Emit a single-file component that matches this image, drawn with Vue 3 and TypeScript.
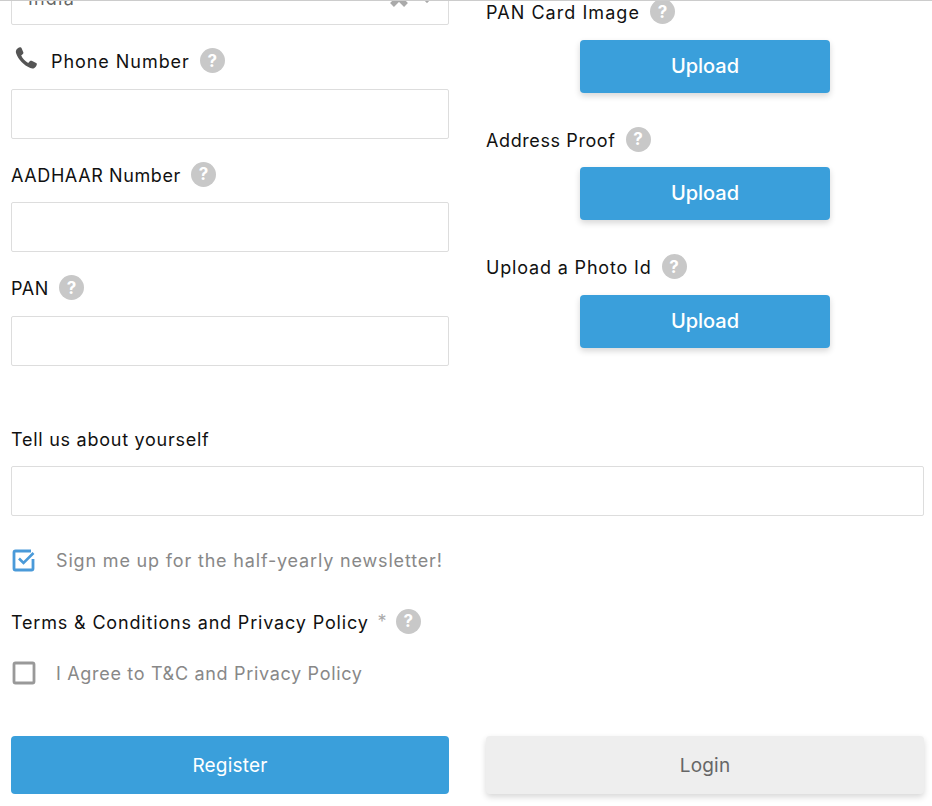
<script setup lang="ts">
interface Field { label: string; spacing: string; phone?: boolean }
const leftFields: Field[] = [
  { label: 'Phone Number', spacing: 'wide', phone: true },
  { label: 'AADHAAR Number', spacing: 'tight' },
  { label: 'PAN', spacing: 'tight' },
]
const uploads: Field[] = [
  { label: 'PAN Card Image', spacing: 'widest' },
  { label: 'Address Proof', spacing: 'tight' },
  { label: 'Upload a Photo Id', spacing: 'mid' },
]
</script>

<template>
  <div class="page">
    <div class="topline"></div>
    <div class="cols">
      <div class="col">
        <div class="select">
          <span class="select-value">India</span>
          <svg class="select-clear" width="20" height="20" viewBox="0 0 20 20">
            <path d="M3 3 L17 17 M17 3 L3 17" stroke="#aaa" stroke-width="5.5" fill="none" />
          </svg>
          <svg class="select-caret" width="10" height="6" viewBox="0 0 10 6">
            <path d="M1 1 L5 5 L9 1" stroke="#aaa" stroke-width="1.6" fill="none" />
          </svg>
        </div>
        <div v-for="f in leftFields" :key="f.label" class="field">
          <div class="label">
            <svg v-if="f.phone" class="phone" width="24" height="24" viewBox="0 0 24 24">
              <path fill="#555" d="M2.5 3.6 C3.4 2.4 4.8 1.5 6 1.2 C6.7 1 7.2 1.3 7.5 2 L9.3 6.3 C9.6 7 9.4 7.5 8.9 8 L7.2 9.6 C8.5 12.5 11.3 15.6 14.2 17 L16 15.1 C16.5 14.6 17.1 14.5 17.7 14.8 L22.1 17 C22.7 17.3 23 17.8 22.8 18.5 C22.5 19.9 21.6 21.1 20.4 21.9 C19.3 22.6 17.8 22.6 16.3 22 C9.8 19.5 4.3 13.6 2.2 7.6 C1.7 6.1 1.8 4.7 2.5 3.6 Z" />
            </svg>
            <span class="label-text" :class="f.spacing">{{ f.label }}</span>
            <span class="help">?</span>
          </div>
          <div class="input"></div>
        </div>
      </div>
      <div class="col col-right">
        <div v-for="u in uploads" :key="u.label" class="upload">
          <div class="label">
            <span class="label-text" :class="u.spacing">{{ u.label }}</span>
            <span class="help">?</span>
          </div>
          <button class="btn-upload" type="button">Upload</button>
        </div>
      </div>
    </div>

    <div class="about">
      <div class="label"><span class="label-text mid-low">Tell us about yourself</span></div>
      <div class="input"></div>
    </div>

    <div class="check-row news">
      <svg class="box" width="24" height="24" viewBox="0 0 24 24" fill="none">
        <path d="M21 11 V20.5 A1.5 1.5 0 0 1 19.5 22 H3.5 A1.5 1.5 0 0 1 2 20.5 V4.5 A1.5 1.5 0 0 1 3.5 3 H19" stroke="#4a9ad9" stroke-width="2.8" />
        <path d="M7 10.5 L11.5 15 L21.5 5" stroke="#4a9ad9" stroke-width="2.6" />
      </svg>
      <span class="check-text mid">Sign me up for the half-yearly newsletter!</span>
    </div>

    <div class="label terms">
      <span class="label-text mid">Terms &amp; Conditions and Privacy Policy</span>
      <span class="asterisk">*</span>
      <span class="help">?</span>
    </div>

    <div class="check-row agree">
      <svg class="box" width="24" height="24" viewBox="0 0 24 24" fill="none">
        <rect x="2" y="2" width="20" height="20" rx="1.5" stroke="#999" stroke-width="2.8" />
      </svg>
      <span class="check-text tight-plus">I Agree to T&amp;C and Privacy Policy</span>
    </div>

    <div class="actions">
      <button class="btn btn-primary" type="button">Register</button>
      <button class="btn btn-muted" type="button">Login</button>
    </div>
  </div>
</template>

<style scoped>
.page {
  position: relative;
  width: 932px;
  height: 806px;
  overflow: hidden;
  box-sizing: border-box;
  padding: 0 8px 0 11px;
  background: #fff;
  font-family: Inter, "Noto Sans", sans-serif;
  color: #111;
}
.topline {
  position: absolute;
  left: 0;
  right: 0;
  top: 0;
  height: 1px;
  background: #ccc;
  z-index: 2;
}
.cols {
  display: grid;
  grid-template-columns: 438px 438px;
  column-gap: 37px;
  margin-top: -26px;
  height: 418px;
}
.col-right {
  padding-top: 24.9px;
}
.select {
  position: relative;
  box-sizing: border-box;
  height: 51px;
  border: 1px solid #ddd;
  border-radius: 2px;
  margin-bottom: 22.5px;
}
.select-value {
  position: absolute;
  left: 16px;
  top: 13px;
  font-size: 18px;
  letter-spacing: 1.2px;
  color: #666;
  line-height: 22px;
}
.select-clear {
  position: absolute;
  left: 377px;
  top: 13px;
}
.select-caret {
  position: absolute;
  left: 410px;
  top: 22px;
}
.label {
  display: flex;
  align-items: center;
  height: 26px;
  margin-bottom: 15px;
  font-size: 18px;
}
.label-text {
  padding-top: 2px;
  white-space: nowrap;
}
.tight { letter-spacing: 0.6px; }
.tight-plus { letter-spacing: 0.68px; }
.mid-low { letter-spacing: 0.74px; }
.mid { letter-spacing: 0.83px; }
.wide { letter-spacing: 0.95px; }
.widest { letter-spacing: 1.05px; }
.phone {
  margin: -5px 13px 0 3px;
  flex: none;
}
.help {
  display: inline-flex;
  align-items: center;
  justify-content: center;
  flex: none;
  width: 25px;
  height: 25px;
  margin-left: 10px;
  border-radius: 50%;
  background: #c8c8c8;
  color: #fff;
  font-size: 17px;
  font-weight: 700;
}
.input {
  box-sizing: border-box;
  height: 50px;
  border: 1px solid #ddd;
  border-radius: 2px;
  background: #fff;
}
.field {
  margin-bottom: 22.5px;
}
.upload {
  display: flex;
  flex-direction: column;
  margin-bottom: 33.5px;
}
.btn-upload {
  align-self: center;
  width: 250px;
  height: 53px;
  padding: 0 0 1px;
  border: 0;
  border-radius: 4px;
  background: #3a9fdb;
  color: #fff;
  font: 500 20px Inter, "Noto Sans", sans-serif;
  box-shadow: 0 3px 6px rgba(0, 0, 0, 0.16);
}
.about {
  margin-top: 33px;
}
.check-row {
  display: flex;
  align-items: center;
  height: 24px;
}
.box {
  flex: none;
  margin-left: 1px;
}
.check-text {
  margin-left: 20px;
  font-size: 18px;
  color: #888;
  white-space: nowrap;
}
.news {
  margin-top: 32px;
}
.terms {
  margin-top: 36px;
  margin-bottom: 0;
}
.asterisk {
  margin-left: 9px;
  color: #aaa;
  font-size: 18px;
}
.terms .help {
  margin-left: 9px;
}
.agree {
  margin-top: 27px;
}
.actions {
  display: grid;
  grid-template-columns: 438px 438px;
  column-gap: 37px;
  margin-top: 51px;
}
.btn {
  height: 58px;
  border: 0;
  border-radius: 4px;
  font: 400 19px Inter, "Noto Sans", sans-serif;
  letter-spacing: 0.2px;
}
.btn-primary {
  background: #3a9fdb;
  color: #fff;
}
.btn-muted {
  background: #eee;
  color: #666;
  box-shadow: 0 3px 6px rgba(0, 0, 0, 0.16);
}
</style>
